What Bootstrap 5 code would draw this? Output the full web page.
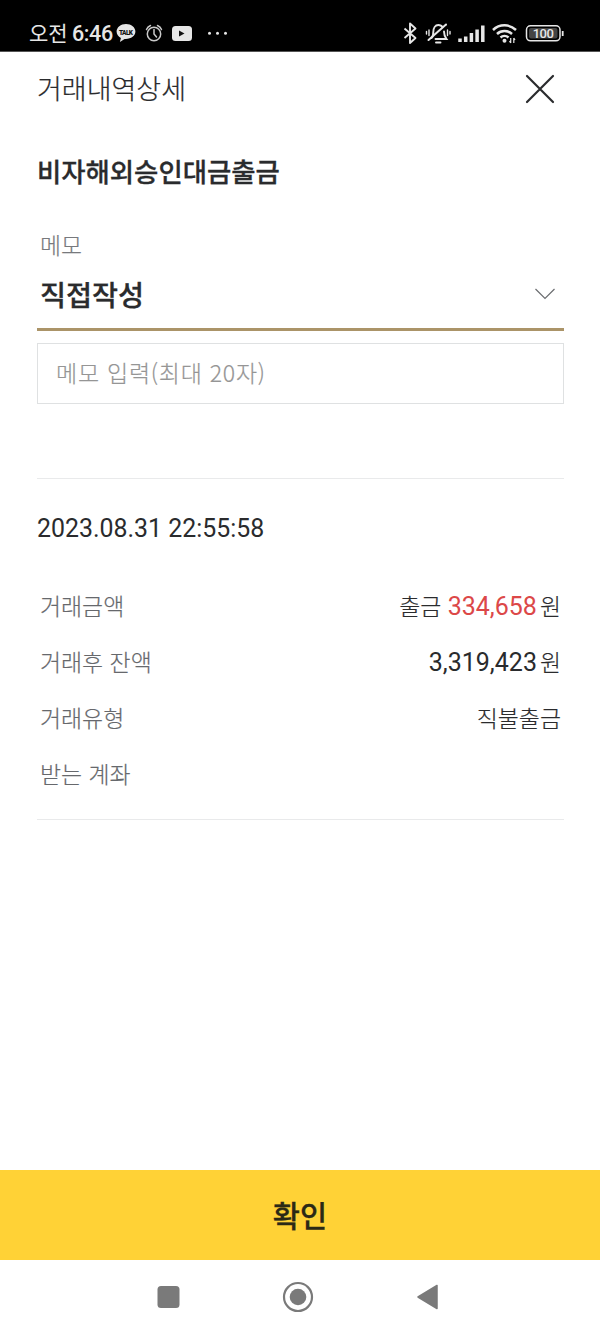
<!DOCTYPE html>
<html lang="ko">
<head>
<meta charset="utf-8">
<meta name="viewport" content="width=device-width, initial-scale=1">
<title>거래내역상세</title>
<link rel="stylesheet" href="https://cdn.jsdelivr.net/npm/bootstrap@5.3.0/dist/css/bootstrap.min.css">
<style>
  body { font-family: "Noto Sans CJK KR", sans-serif; color: #2a2b2d; font-weight: 300; line-height: 1; }
  .screen { width: 600px; height: 1333px; overflow: hidden; }
  .roboto { font-family: Roboto, "Noto Sans CJK KR", sans-serif; font-weight: 400; -webkit-text-stroke: 0; }
  .status-bar { height: 52px; padding: 15px 36px 0 29px; background: #000; border-bottom: 1px solid #555; color: #e6e6e6; }
  .status-bar .clock { font-size: 21px; font-weight: 400; line-height: 35px; width: 84px; }
  .status-bar .clock .roboto { font-size: 21.5px; font-weight: 500; margin-left: -1.5px; letter-spacing: -.4px; }
  .status-bar svg { display: block; }
  .page-head { height: 73px; padding: 0 45px 0 37px; }
  .page-head h1 { font-size: 27px; font-weight: 300; line-height: 40px; padding-bottom: 2px; }
  .page-head h1, .memo-label, .detail { -webkit-text-stroke: .2px; }
  .content { padding: 0 36px 0 37px; }
  .deal-name { font-size: 26.4px; font-weight: 500; line-height: 40px; margin-top: 26px; -webkit-text-stroke: .3px; }
  .memo-label { font-size: 22.8px; line-height: 34px; margin-top: 37px; padding-left: 3px; color: #77797d; }
  .memo-select { height: 69px; padding: 0 9px 2px 3px; border-bottom: 3px solid #ab9468; font-size: 28.3px; font-weight: 500; line-height: 40px; -webkit-text-stroke: .3px; }
  .memo-input { height: 61px; margin-top: 12px; padding: 0 18px 3px; border: 1px solid #dfe1e2; border-radius: 0; font-size: 23px; font-weight: 300; letter-spacing: .75px; -webkit-text-stroke: .2px; }
  .memo-input::placeholder { color: #959595; }
  .memo-input, .memo-input:focus { box-shadow: none; background: #fff; }
  .divider { border-top: 1px solid #e9eaeb; }
  .stamp { font-size: 24.9px; line-height: 36px; margin-top: 32px; }
  .detail { font-size: 22.9px; line-height: 34px; padding: 41px 3px 0; gap: 22px; }
  .detail > div { height: 34px; }
  .detail dt { font-weight: 300; color: #66686c; }
  .detail .roboto { font-size: 25px; }
  .detail .won { margin-left: 3px; }
  .detail .out { color: #dc4848; }
  .confirm { height: 90px; padding-bottom: 7px; border-radius: 0; background: #ffd236; color: #2b2916; font-size: 29.5px; font-weight: 500; -webkit-text-stroke: .3px; --bs-btn-hover-bg: #ffd236; }
  .nav-keys { height: 73px; }
</style>
</head>
<body>
<div class="screen d-flex flex-column bg-white">
  <header class="status-bar d-flex align-items-start flex-shrink-0">
    <div class="clock text-nowrap">오전 <span class="roboto">6:46</span></div>
    <svg width="120" height="36" viewBox="0 0 120 36" class="ms-0">
      <path d="M13 9c-5.300 0-9.400 3.400-9.400 7.600 0 2.800 1.700 5.200 4.300 6.500l-1 4 4.700-3.200c5.900.5 10.800-2.700 10.800-7.300C22.400 12.400 18.300 9 13 9z" fill="#e6e6e6"/>
      <text x="13" y="19.500" text-anchor="middle" font-family="Roboto" font-weight="900" font-size="6.500" textLength="14" fill="#111">TALK</text>
      <g fill="none" stroke="#c9c9c9" stroke-width="1.500" stroke-linecap="round">
        <circle cx="41" cy="19" r="6.700"/><path d="M41 14.500V19l2.500 3M33.500 14.500a7 7 0 0 1 4-4M48.500 14.500a7 7 0 0 0-4-4"/>
      </g>
      <rect x="59" y="11" width="20" height="15" rx="3.500" fill="#e6e6e6"/><path d="M66 15.500v6l5.500-3z" fill="#111"/>
      <g fill="#e6e6e6"><circle cx="96.500" cy="18.300" r="1.500"/><circle cx="104.500" cy="18.300" r="1.500"/><circle cx="112.500" cy="18.300" r="1.500"/></g>
    </svg>
    <svg width="164" height="36" viewBox="0 0 164 36" class="ms-auto" fill="none" stroke="#e6e6e6">
      <path d="M4.500 13.500l11 9.500-5.500 5V8.500l5.500 5-11 9.500" stroke-width="1.900" stroke-linejoin="round"/>
      <g stroke-width="1.900" stroke-linecap="round">
        <path d="M31.500 23c1.800-1.500 1.800-3 1.800-6 0-4 2-7 5-7 2 0 3.500.9 4.300 2.300M44 16.500c0 4 .5 4.800 2.500 7.500H35.500"/>
        <path d="M46 9.500L28.500 25" stroke-width="2"/><path d="M36 27.500h4.500"/>
        <path d="M29 15v5.500M26.500 16.500v2.500M47.500 15v5.500M50 16.500v2.500" stroke-width="1.400"/>
      </g>
      <path d="M60 27v-3.500M65.700 27v-5.500M71.400 27V18M77.100 27V14.500M82.800 27V10.500" stroke-width="3.500" stroke-linecap="butt"/>
      <path d="M93 15a16.500 16.500 0 0 1 23 0M97 19a11 11 0 0 1 15 0M100.500 22.500a6 6 0 0 1 8 0" stroke-width="2.500"/>
      <circle cx="104.500" cy="25.700" r="2" fill="#e6e6e6" stroke="none"/><path d="M110.700 23v5M113.800 23v5M109.500 26l1.200 2M115 25l-1.200-2" stroke-width="1.200"/>
      <rect x="126.500" y="10.800" width="33.500" height="15" rx="4" stroke-width="1.500"/>
      <rect x="129" y="13" width="28.500" height="10.600" rx="2" fill="#444" stroke="none"/>
      <path d="M162.700 16v5" stroke-width="1.800"/>
      <text x="143.300" y="23.200" text-anchor="middle" font-family="Roboto" font-weight="500" font-size="13" textLength="21" fill="#e6e6e6" stroke="none">100</text>
    </svg>
  </header>

  <div class="page-head d-flex align-items-center justify-content-between flex-shrink-0">
    <h1 class="mb-0">거래내역상세</h1>
    <svg width="30" height="30" viewBox="0 0 30 30" fill="none" stroke="#2a2b2d" stroke-width="2.200" stroke-linecap="round" role="img" aria-label="닫기"><path d="M2 2l26 26M28 2l-26 26"/></svg>
  </div>

  <main class="content flex-grow-1">
    <h2 class="deal-name mb-0">비자해외승인대금출금</h2>
    <div class="memo-label">메모</div>
    <div class="memo-select d-flex align-items-center justify-content-between">
      <span>직접작성</span>
      <svg width="20" height="12" viewBox="0 0 20 12" fill="none" stroke="#6b6d70" stroke-width="1.200"><path d="M.5 1l9.500 9.500L19.500 1"/></svg>
    </div>
    <input type="text" class="form-control memo-input" placeholder="메모 입력(최대 20자)" aria-label="메모 입력">
    <div class="divider" style="margin-top:74px"></div>
    <div class="stamp roboto">2023.08.31 22:55:58</div>
    <dl class="detail d-flex flex-column mb-0">
      <div class="d-flex justify-content-between"><dt>거래금액</dt><dd class="mb-0">출금 <span class="roboto out">334,658</span><span class="won">원</span></dd></div>
      <div class="d-flex justify-content-between"><dt>거래후 잔액</dt><dd class="mb-0"><span class="roboto">3,319,423</span><span class="won">원</span></dd></div>
      <div class="d-flex justify-content-between"><dt>거래유형</dt><dd class="mb-0">직불출금</dd></div>
      <div class="d-flex justify-content-between"><dt>받는 계좌</dt><dd class="mb-0"></dd></div>
    </dl>
    <div class="divider" style="margin-top:29px"></div>
  </main>

  <button type="button" class="btn confirm w-100 border-0 flex-shrink-0">확인</button>
  <nav class="nav-keys flex-shrink-0">
    <svg width="600" height="73" viewBox="0 0 600 73" fill="#7a7a7a">
      <rect x="157.500" y="26" width="22" height="22" rx="3.500"/>
      <circle cx="298" cy="37" r="14" fill="none" stroke="#7a7a7a" stroke-width="2.200"/><circle cx="298" cy="37" r="8.300"/>
      <path d="M418 37l19-11.500v23z" stroke="#7a7a7a" stroke-width="1.500" stroke-linejoin="round"/>
    </svg>
  </nav>
</div>
<script src="https://cdn.jsdelivr.net/npm/bootstrap@5.3.0/dist/js/bootstrap.bundle.min.js"></script>
</body>
</html>
